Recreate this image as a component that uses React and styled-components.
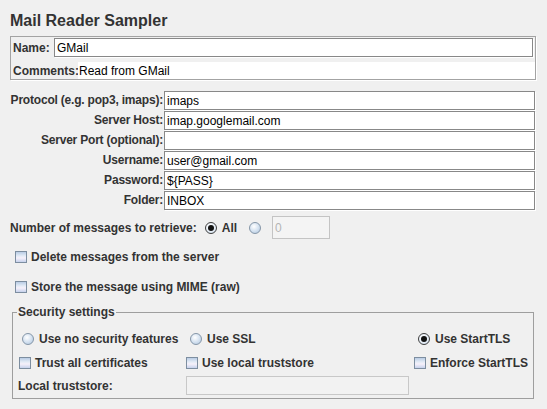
import React from "react";
import styled, { createGlobalStyle, css } from "styled-components";

const GlobalStyle = createGlobalStyle`
  html, body {
    margin: 0;
    background: #f0f0f0;
  }
  body {
    font-family: "Liberation Sans", Arial, sans-serif;
    font-size: 12px;
    color: #333333;
  }
  * { box-sizing: border-box; }
`;

const Page = styled.div`
  width: 547px;
  padding: 11px 11px 0 10px;
  display: flex;
  flex-direction: column;
`;

const Title = styled.h1`
  margin: 0 0 5px 0;
  font-size: 16px;
  line-height: 20px;
  font-weight: bold;
  color: #333333;
`;

const NameBox = styled.div`
  border: 1px solid #a3a3a3;
  box-shadow: 1px 1px 0 #ffffff;
  padding: 0 0 0 1px;
  display: flex;
  flex-direction: column;
`;

const NameRow = styled.div`
  display: flex;
  align-items: center;
  height: 21px;
  padding-right: 2px;
`;

const CommentsRow = styled.div`
  display: flex;
  align-items: center;
  height: 17px;
  margin-top: 4px;
`;

const BoxLabel = styled.span`
  font-weight: bold;
  white-space: nowrap;
  padding-left: 1px;
  width: ${(p) => p.$width}px;
  flex: none;
`;

const CommentsArea = styled.div`
  flex: 1;
  align-self: stretch;
  background: #ffffff;
  color: #000000;
  display: flex;
  align-items: center;
  padding-left: 1px;
`;

const inputBase = css`
  height: 19px;
  margin: 0;
  border: 1px solid #888888;
  box-shadow: 1px 1px 0 #ffffff;
  border-radius: 0;
  background: #ffffff;
  color: #000000;
  font-family: "Liberation Sans", Arial, sans-serif;
  font-size: 12px;
  padding: 0 2px;
  outline: none;
`;

const TextInput = styled.input`
  ${inputBase}
  flex: 1;
  min-width: 0;
  width: 100%;
`;

const FieldsGrid = styled.div`
  display: grid;
  grid-template-columns: 154px 1fr;
  row-gap: 1px;
  margin-top: 11px;
  padding-right: 1px;
`;

const FieldLabel = styled.label`
  font-weight: bold;
  text-align: right;
  white-space: nowrap;
  line-height: 19px;
  letter-spacing: -0.2px;
  padding-right: 1px;
`;

const NumberRow = styled.div`
  display: flex;
  align-items: center;
  height: 23px;
  margin-top: 6px;
`;

const BoldText = styled.span`
  font-weight: bold;
  white-space: nowrap;
`;

const Option = styled.span`
  display: inline-flex;
  align-items: center;
  gap: ${(p) => (p.$gap != null ? p.$gap : 5)}px;
  margin-left: ${(p) => p.$ml || 0}px;
  padding-left: ${(p) => p.$pl || 0}px;
  font-weight: bold;
  white-space: nowrap;
`;

const RadioIcon = styled.span`
  width: 12px;
  height: 12px;
  border-radius: 50%;
  flex: none;
  position: relative;
  border: 1px solid ${(p) => (p.$on ? "#3f3f3f" : "#8596a8")};
  background: ${(p) =>
    p.$on
      ? "radial-gradient(circle at 40% 35%, #ffffff 0%, #e2ebf5 65%, #c2d3e6 100%)"
      : "radial-gradient(circle at 40% 35%, #ffffff 0%, #d6e3f1 50%, #adc4dd 100%)"};
  ${(p) =>
    p.$on &&
    css`
      &::after {
        content: "";
        position: absolute;
        left: 2px;
        top: 2px;
        width: 6px;
        height: 6px;
        border-radius: 50%;
        background: #111111;
      }
    `}
`;

const CheckIcon = styled.span`
  width: 12px;
  height: 12px;
  flex: none;
  border: 1px solid #7d8ea0;
  background: linear-gradient(180deg, #b9cce4 0%, #e4ecf6 40%, #f6f0fa 60%, #c6d2ec 100%);
`;

const CountInput = styled.input`
  ${inputBase}
  width: 58px;
  height: 23px;
  margin-left: 11px;
  border-color: #c4c4c4;
  box-shadow: none;
  background: #f4f4f4;
  color: #b4b4b4;
`;

const CheckRow = styled.div`
  display: flex;
  align-items: center;
  height: 22px;
  padding-left: 5px;
  margin-top: ${(p) => p.$mt}px;
`;

const Group = styled.fieldset`
  margin: 7px 2px 0 2px;
  border: 1px solid #9e9e9e;
  padding: 9px 0 3px 4px;
  min-width: 0;
`;

const Legend = styled.legend`
  padding: 0 1px;
  font-weight: bold;
  line-height: 14px;
  color: #333333;
`;

const SecGrid = styled.div`
  display: grid;
  grid-template-columns: 169px 228px 1fr;
  grid-template-rows: 22px 22px 19px;
  row-gap: 2px;
  align-items: center;
`;

const GroupLabel = styled.span`
  font-weight: bold;
  padding-left: 1px;
  white-space: nowrap;
`;

const StoreInput = styled.input`
  ${inputBase}
  width: 223px;
  border-color: #c8c8c8;
  box-shadow: none;
  background: #f2f2f2;
`;

const Radio = ({ on, children, ...rest }) => (
  <Option {...rest}>
    <RadioIcon $on={on} />
    {children}
  </Option>
);

const Check = ({ children, ...rest }) => (
  <Option $gap={4} {...rest}>
    <CheckIcon />
    {children}
  </Option>
);

const fields = [
  ["Protocol (e.g. pop3, imaps):", "imaps"],
  ["Server Host:", "imap.googlemail.com"],
  ["Server Port (optional):", ""],
  ["Username:", "user@gmail.com"],
  ["Password:", "${PASS}"],
  ["Folder:", "INBOX"],
];

export default function App() {
  return (
    <>
      <GlobalStyle />
      <Page>
        <Title>Mail Reader Sampler</Title>
        <NameBox>
          <NameRow>
            <BoxLabel $width={42}>Name:</BoxLabel>
            <TextInput defaultValue="GMail" />
          </NameRow>
          <CommentsRow>
            <BoxLabel $width={66}>Comments:</BoxLabel>
            <CommentsArea>Read from GMail</CommentsArea>
          </CommentsRow>
        </NameBox>

        <FieldsGrid>
          {fields.map(([label, value]) => (
            <React.Fragment key={label}>
              <FieldLabel>{label}</FieldLabel>
              <TextInput defaultValue={value} />
            </React.Fragment>
          ))}
        </FieldsGrid>

        <NumberRow>
          <BoldText>Number of messages to retrieve:</BoldText>
          <Radio on $ml={8}>All</Radio>
          <Radio $ml={12} />
          <CountInput defaultValue="0" disabled />
        </NumberRow>

        <CheckRow $mt={7}>
          <Check>Delete messages from the server</Check>
        </CheckRow>
        <CheckRow $mt={8}>
          <Check>Store the message using MIME (raw)</Check>
        </CheckRow>

        <Group>
          <Legend>Security settings</Legend>
          <SecGrid>
            <Radio $pl={5}>Use no security features</Radio>
            <Radio $pl={4}>Use SSL</Radio>
            <Radio on $pl={4}>Use StartTLS</Radio>
            <Check $pl={2}>Trust all certificates</Check>
            <Check>Use local truststore</Check>
            <Check>Enforce StartTLS</Check>
            <GroupLabel>Local truststore:</GroupLabel>
            <StoreInput disabled defaultValue="" />
            <span />
          </SecGrid>
        </Group>
      </Page>
    </>
  );
}
